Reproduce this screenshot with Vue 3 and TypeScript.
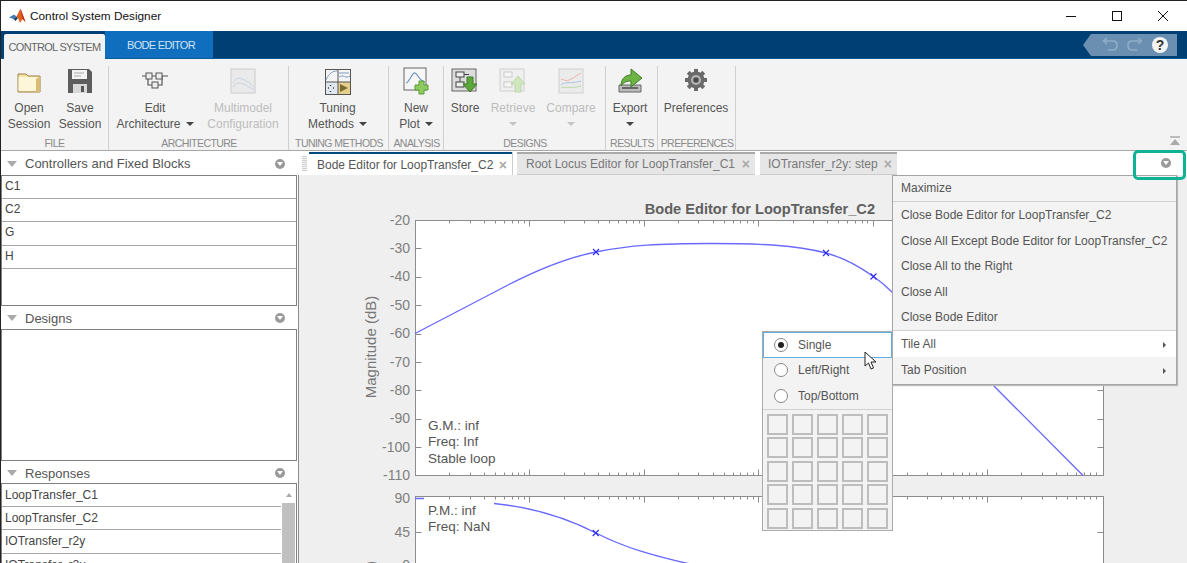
<template>
  <div class="window">
    <!-- title bar -->
    <div class="titlebar">
      <svg class="logo" viewBox="0 0 18 16" width="18" height="16">
        <path d="M0 9.5 L5 6.5 L7.5 8.5 L4.5 11 Z" fill="#3f7db5" />
        <path d="M4.5 11 L7.5 8.5 L9 10 L6.5 13 Z" fill="#1d3f66" />
        <path d="M7.5 8.5 L11.5 0.5 L16.5 14 L13.5 11 L11 15 L9 10 Z" fill="#e2601e" />
        <path d="M11.5 0.5 L16.5 14 L13.5 11 Z" fill="#b8321a" />
      </svg>
      <span class="title-text">Control System Designer</span>
      <div class="win-controls">
        <svg viewBox="0 0 46 31" width="46" height="31"><path d="M0 15.5 H10" transform="translate(18 0)" stroke="#111" /></svg>
        <svg viewBox="0 0 46 31" width="46" height="31"><rect x="18.5" y="10.5" width="9" height="9" fill="none" stroke="#111" /></svg>
        <svg viewBox="0 0 46 31" width="46" height="31"><path d="M18 10 L28 20 M28 10 L18 20" stroke="#111" /></svg>
      </div>
    </div>

    <!-- ribbon tabs -->
    <div class="ribbon-tabs">
      <div class="rtab active">CONTROL SYSTEM</div>
      <div class="rtab other">BODE EDITOR</div>
      <div class="quick">
        <svg viewBox="0 0 94 22" width="94" height="22">
          <path d="M0 11 L8 0 H94 V22 H8 Z" fill="#6a8fb0" />
          <path d="M21 7 H30 Q34 7 34 11.5 Q34 16 30 16 H25 M24 4 L20.5 7 L24 10" fill="none" stroke="#8eaec9" stroke-width="1.6" />
          <path d="M58 7 H49 Q45 7 45 11.5 Q45 16 49 16 H54 M55 4 L58.5 7 L55 10" fill="none" stroke="#8eaec9" stroke-width="1.6" />
          <circle cx="77" cy="11" r="8" fill="#f4f4f4" />
          <text x="77" y="15.5" class="help">?</text>
        </svg>
      </div>
    </div>

    <!-- toolstrip -->
    <div class="toolstrip">
      <div v-for="sec in sections" :key="sec.label" class="section" :style="{ width: sec.width + 'px' }">
        <div class="buttons" :style="{ paddingLeft: (sec.pad || 0) + 'px' }">
          <div
            v-for="b in sec.buttons"
            :key="b.id"
            class="tool"
            :class="{ disabled: b.disabled }"
            :style="{ width: b.width + 'px' }"
          >
            <svg class="tool-icon" viewBox="0 0 28 28" width="28" height="28" v-html="icons[b.id]"></svg>
            <div class="tool-line">{{ b.lines[0] }}</div>
            <div class="tool-line">
              {{ b.lines[1] }}<span v-if="b.caret" class="caret" :class="{ alone: !b.lines[1] }"></span>
            </div>
          </div>
        </div>
        <div class="section-label">{{ sec.label }}</div>
      </div>
      <svg class="collapse" viewBox="0 0 12 10" width="12" height="10">
        <path d="M1 1 H11" stroke="#aaa" stroke-width="1.5" />
        <path d="M6 3 L11 9 H1 Z" fill="#aaa" />
      </svg>
    </div>

    <div class="main">
      <!-- left data browser -->
      <div class="browser">
        <div class="panel-head head-a">
          <span class="tri"></span><span class="panel-title">Controllers and Fixed Blocks</span>
          <span class="opt"></span>
        </div>
        <div class="list list-a">
          <div v-for="name in blocks" :key="name" class="row">{{ name }}</div>
        </div>
        <div class="panel-head">
          <span class="tri"></span><span class="panel-title">Designs</span>
          <span class="opt"></span>
        </div>
        <div class="list list-b"></div>
        <div class="panel-head head-c">
          <span class="tri"></span><span class="panel-title">Responses</span>
          <span class="opt"></span>
        </div>
        <div class="list list-c">
          <div class="rows">
            <div v-for="name in responses" :key="name" class="row">{{ name }}</div>
          </div>
          <div class="scroll">
            <span class="scroll-up"></span>
            <div class="thumb"></div>
          </div>
        </div>
      </div>

      <!-- document area -->
      <div class="docs">
        <div class="doc-tabs">
          <div class="grip"></div>
          <div v-for="t in docTabs" :key="t.label" class="dtab" :class="{ active: t.active }" :style="{ width: t.width + 'px' }">
            <span class="dtab-label">{{ t.label }}</span>
            <span class="dtab-x">×</span>
          </div>
          <span class="opt doc-opt"></span>
        </div>
        <div class="plot-wrap">
          <svg class="plot" viewBox="300 176 887 387" width="887" height="387">
            <text x="875" y="214" text-anchor="end" class="plot-title">Bode Editor for LoopTransfer_C2</text>

            <rect x="415.5" y="220.5" width="688" height="255" fill="#fff" stroke="#8c8c8c" />
            <rect x="415.5" y="496.5" width="688" height="80" fill="#fff" stroke="#8c8c8c" />
            <path :d="tickPath" stroke="#8c8c8c" fill="none" />

            <text v-for="(v, i) in magTicks" :key="v" x="410" :y="224.5 + i * 28.4" class="tick-label">{{ v }}</text>
            <text x="410" y="503" class="tick-label">90</text>
            <text x="410" y="537" class="tick-label">45</text>
            <text x="410" y="570" class="tick-label">0</text>

            <text transform="translate(376 347) rotate(-90)" text-anchor="middle" class="axis-label">Magnitude (dB)</text>
            <text transform="translate(376 561) rotate(-90)" text-anchor="end" class="axis-label">Phase (deg)</text>

            <path
              d="M415 333.5 L508 285 C545 266 570 257 596 252 C630 245 660 243.5 710 243.5 C760 243.5 795 245 826 253 C845 258 860 267 873.5 276.5 C880 281 886 286 893 293 L993 385 L1083 475.5"
              class="curve"
            />
            <path d="M415 498.5 H424 M494 503.5 C530 507 565 517 596 533 C625 548 655 556 690 564" class="curve" />
            <path
              v-for="m in markers"
              :key="m[0]"
              :d="`M${m[0] - 3} ${m[1] - 3} l6 6 m0 -6 l-6 6`"
              stroke="#2a2aee"
              stroke-width="1.1"
            />

            <text x="428" y="430" class="note">G.M.: inf</text>
            <text x="428" y="446" class="note">Freq: Inf</text>
            <text x="428" y="462.5" class="note">Stable loop</text>
            <text x="428" y="515" class="note">P.M.: inf</text>
            <text x="428" y="531" class="note">Freq: NaN</text>
          </svg>
        </div>
      </div>
    </div>

    <!-- tab options menu -->
    <div class="menu">
      <div class="mi first">Maximize</div>
      <div class="mi-group">
        <div v-for="item in closeItems" :key="item" class="mi">{{ item }}</div>
      </div>
      <div class="mi sub hot">Tile All<span class="arrow"></span></div>
      <div class="mi sub">Tab Position<span class="arrow"></span></div>
    </div>

    <!-- tile submenu -->
    <div class="tile">
      <div v-for="(r, i) in tileModes" :key="r" class="radio-row" :class="{ selected: i === 0 }">
        <span class="radio" :class="{ on: i === 0 }"></span>{{ r }}
      </div>
      <div class="tile-grid">
        <div v-for="n in 25" :key="n" class="cell"></div>
      </div>
    </div>

    <svg class="cursor" viewBox="0 0 14 20" width="14" height="20">
      <path d="M1 1 L1 15 L4.5 12 L7 18 L9.5 17 L7 11 L12 11 Z" fill="#fff" stroke="#222" stroke-width="1" />
    </svg>

    <div class="highlight"></div>
  </div>
</template>

<script setup lang="ts">
interface ToolButton {
  id: string
  lines: string[]
  width: number
  caret?: boolean
  disabled?: boolean
}

interface Section {
  label: string
  width: number
  pad?: number
  buttons: ToolButton[]
}

const sections: Section[] = [
  {
    label: 'FILE',
    width: 109,
    pad: 3,
    buttons: [
      { id: 'open', lines: ['Open', 'Session'], width: 52 },
      { id: 'save', lines: ['Save', 'Session'], width: 50 }
    ]
  },
  {
    label: 'ARCHITECTURE',
    width: 180,
    buttons: [
      { id: 'arch', lines: ['Edit', 'Architecture'], width: 92, caret: true },
      { id: 'multi', lines: ['Multimodel', 'Configuration'], width: 84, disabled: true }
    ]
  },
  {
    label: 'TUNING METHODS',
    width: 100,
    buttons: [{ id: 'tuning', lines: ['Tuning', 'Methods'], width: 97, caret: true }]
  },
  {
    label: 'ANALYSIS',
    width: 55,
    buttons: [{ id: 'newplot', lines: ['New', 'Plot'], width: 54, caret: true }]
  },
  {
    label: 'DESIGNS',
    width: 162,
    buttons: [
      { id: 'store', lines: ['Store', ''], width: 42 },
      { id: 'retrieve', lines: ['Retrieve', ''], width: 54, caret: true, disabled: true },
      { id: 'compare', lines: ['Compare', ''], width: 62, caret: true, disabled: true }
    ]
  },
  {
    label: 'RESULTS',
    width: 52,
    buttons: [{ id: 'export', lines: ['Export', ''], width: 48, caret: true }]
  },
  {
    label: 'PREFERENCES',
    width: 78,
    buttons: [{ id: 'prefs', lines: ['Preferences', ''], width: 76 }]
  }
]

const icons: Record<string, string> = {
  open: `<path d="M3 7 h8 l2 2 h12 v16 h-22 z" fill="#f7e3a4" stroke="#9a7f45"/><path d="M3.5 10 h21 v14 h-21 z" fill="#fdf6d8"/><path d="M25 9 v16 h-4 v-13 z" fill="#d9bd72"/>`,
  save: `<path d="M2 2 h21 l3 3 v21 h-24 z" fill="#5d5d5d"/><rect x="6" y="3" width="15" height="9" fill="#f3f3f3"/><path d="M8 6 h10 M8 9 h7" stroke="#aaa"/><rect x="7" y="17" width="14" height="9" fill="#d8d8d8"/><rect x="15" y="19" width="3" height="6" fill="#555"/>`,
  arch: `<path d="M1 9 H27 M7 9 v9 h14 v-9" fill="none" stroke="#555" stroke-width="1.2"/><rect x="5" y="6" width="6" height="6" fill="#eee" stroke="#555"/><rect x="15" y="6" width="6" height="6" fill="#eee" stroke="#555"/><rect x="11" y="15" width="6" height="6" fill="#eee" stroke="#555"/>`,
  multi: `<rect x="2" y="2" width="24" height="24" fill="#eaeaea" stroke="#ccc"/><path d="M4 16 C9 8 13 12 17 14 S23 18 25 20 M4 20 C9 13 14 16 25 23" fill="none" stroke="#c6d3e2"/>`,
  tuning: `<rect x="1" y="2" width="26" height="26" fill="#555"/><rect x="2" y="3" width="11.5" height="11.5" fill="#f4f4f4"/><rect x="14.5" y="3" width="11.5" height="11.5" fill="#f4f4f4"/><rect x="2" y="15.5" width="11.5" height="11.5" fill="#dfe6ee"/><rect x="14.5" y="15.5" width="11.5" height="11.5" fill="#e6cf8c"/><path d="M2 13 C5 6 9 4 13 4 M15 6 H25 M15 10 C19 7 22 12 26 9" fill="none" stroke="#7e9cc0"/><path d="M16 17 L24 21 L16 25 Z" fill="#7a6a30"/><path d="M4 21 h1 M9 21 h1 M6.5 18 v1 M6.5 24 v1" stroke="#444" stroke-width="1.5"/>`,
  newplot: `<rect x="2" y="1" width="22" height="22" fill="#f6f6f6" stroke="#666"/><path d="M4 16 C8 15 10 5 13 6 S17 14 23 15" fill="none" stroke="#6f94c4" stroke-width="1.2"/><path d="M17 14 h5 v4 h4 v5 h-4 v4 h-5 v-4 h-4 v-5 h4 z" fill="#8ecb5e" stroke="#5d9a38"/>`,
  store: `<rect x="1" y="2" width="24" height="22" fill="#dcdcdc" stroke="#666"/><rect x="5" y="5" width="8" height="5" fill="#eee" stroke="#444"/><rect x="5" y="15" width="8" height="5" fill="#eee" stroke="#444"/><path d="M9 10 v5 M13 7.5 h5" stroke="#444"/><path d="M16 10 h6 v7 h4 l-7 8 l-7 -8 h4 z" fill="#5da63a" stroke="#3d7a25"/>`,
  retrieve: `<rect x="1" y="2" width="24" height="22" fill="#efefef" stroke="#d0d0d0"/><rect x="5" y="5" width="8" height="5" fill="#f6f6f6" stroke="#ccc"/><rect x="5" y="15" width="8" height="5" fill="#f6f6f6" stroke="#ccc"/><path d="M12 17 l7 -8 l7 8 h-4 v8 h-6 v-8 z" fill="#cfe6bf" stroke="#bcd8aa"/>`,
  compare: `<rect x="2" y="2" width="24" height="24" fill="#ebebeb" stroke="#d0d0d0"/><path d="M4 12 L10 14 L16 11 L24 6" fill="none" stroke="#eab5a8"/><path d="M4 18 C9 14 14 17 24 14" fill="none" stroke="#a9c6e4"/><path d="M4 21 C9 19 14 22 24 19" fill="none" stroke="#bcd8a8"/>`,
  export: `<path d="M3 18 h22 v7 h-22 z" fill="#bbb" stroke="#666"/><rect x="6" y="20" width="16" height="2" fill="#666"/><path d="M5 19 C5 11 10 8 15 8 V2 L26 11 L15 20 V14 C11 14 8 15 5 19 Z" fill="#6cb344" stroke="#3f7f2b"/>`,
  prefs: `<g transform="translate(14 13)"><circle r="8.5" fill="#6a6a6a"/><path d="M-2 -11 h4 v4 h-4 z M-2 7 h4 v4 h-4 z M-11 -2 h4 v4 h-4 z M7 -2 h4 v4 h-4 z" fill="#6a6a6a"/><path d="M-2 -11 h4 v4 h-4 z M-2 7 h4 v4 h-4 z M-11 -2 h4 v4 h-4 z M7 -2 h4 v4 h-4 z" fill="#6a6a6a" transform="rotate(45)"/><circle r="5" fill="#b5b5b5"/><circle r="2.8" fill="#4a4a4a"/></g>`
}

const blocks = ['C1', 'C2', 'G', 'H']
const responses = ['LoopTransfer_C1', 'LoopTransfer_C2', 'IOTransfer_r2y', 'IOTransfer_r2u']

const docTabs = [
  { label: 'Bode Editor for LoopTransfer_C2', width: 203, active: true },
  { label: 'Root Locus Editor for LoopTransfer_C1', width: 238, active: false },
  { label: 'IOTransfer_r2y: step', width: 137, active: false }
]

const closeItems = [
  'Close Bode Editor for LoopTransfer_C2',
  'Close All Except Bode Editor for LoopTransfer_C2',
  'Close All to the Right',
  'Close All',
  'Close Bode Editor'
]

const tileModes = ['Single', 'Left/Right', 'Top/Bottom']

const magTicks = [-20, -30, -40, -50, -60, -70, -80, -90, -100, -110]

const markers = [
  [596, 252],
  [826, 253],
  [873.5, 276.5],
  [595.7, 533]
]

// log-scale x ticks on the top and bottom of each axes, plus the y ticks
const DECADE = 114.4
const X0 = 415
function buildTicks(): string {
  let d = ''
  const xEdges: [number, number][] = [
    [220.5, 1],
    [475.5, -1],
    [496.5, 1]
  ]
  for (let dec = 0; dec < 6; dec++) {
    for (let m = 1; m <= 9; m++) {
      const x = Math.round(X0 + (dec + Math.log10(m)) * DECADE) + 0.5
      if (x > 1103) continue
      const len = m === 1 && dec > 0 ? 6 : 3
      for (const [y, dir] of xEdges) {
        d += `M${x} ${y} v${len * dir} `
      }
    }
  }
  for (let i = 1; i < 9; i++) {
    const y = Math.round(220 + i * 28.4) + 0.5
    d += `M415.5 ${y} h6 M1103.5 ${y} h-6 `
  }
  d += 'M415.5 532.5 h6 M1103.5 532.5 h-6 '
  return d
}
const tickPath = buildTicks()
</script>

<style>
html,
body {
  margin: 0;
  background: #fff;
  overflow: hidden;
}
</style>

<style scoped>
.window {
  position: relative;
  width: 1187px;
  height: 563px;
  overflow: hidden;
  box-sizing: border-box;
  border-top: 1px solid #222;
  font-family: "Liberation Sans", Arial, sans-serif;
  display: flex;
  flex-direction: column;
  background: #fff;
}
.window::before {
  content: "";
  position: absolute;
  left: 0;
  top: 0;
  bottom: 0;
  width: 1px;
  background: #222;
  z-index: 5;
}

.titlebar {
  height: 30px;
  flex: none;
  display: flex;
  align-items: center;
  padding-left: 9px;
  background: #fff;
}
.logo {
  margin-right: 3px;
}
.title-text {
  font-size: 11.8px;
  color: #111;
}
.win-controls {
  margin-left: auto;
  display: flex;
  margin-right: 1px;
}

.ribbon-tabs {
  height: 28px;
  flex: none;
  display: flex;
  background: #003f73;
  position: relative;
  box-sizing: border-box;
  border-bottom: 1px solid #0a5a94;
}
.rtab {
  font-size: 11px;
  letter-spacing: -0.7px;
  white-space: nowrap;
  display: flex;
  align-items: center;
  justify-content: center;
}
.rtab.active {
  width: 101px;
  margin: 3px 0 -1px 4px;
  background: #f3f3f3;
  color: #666;
  border-radius: 2px 2px 0 0;
}
.rtab.other {
  width: 108px;
  box-sizing: border-box;
  padding-left: 4px;
  background: #0f6fbe;
  color: #cfe3f5;
}
.quick {
  margin-left: auto;
  margin-right: 10px;
  margin-top: 3px;
  height: 22px;
}
.help {
  font: bold 14px "Liberation Sans", Arial, sans-serif;
  fill: #333;
  text-anchor: middle;
}

.toolstrip {
  height: 92px;
  flex: none;
  display: flex;
  position: relative;
  background: #f3f3f3;
  box-sizing: border-box;
  border-bottom: 1px solid #a8a8a8;
}
.section {
  flex: none;
  box-sizing: border-box;
  display: flex;
  flex-direction: column;
  position: relative;
}
.section::after {
  content: "";
  position: absolute;
  right: 0;
  top: 7px;
  bottom: 0;
  width: 1px;
  background: #cfcfcf;
}
.buttons {
  flex: 1;
  display: flex;
}
.tool {
  flex: none;
  display: flex;
  flex-direction: column;
  align-items: center;
  padding-top: 8px;
  font-size: 12px;
  color: #555;
}
.tool.disabled {
  color: #bdbdbd;
}
.tool-icon {
  flex: none;
  margin-bottom: 5px;
}
.tool-line {
  height: 16px;
  line-height: 16px;
  white-space: nowrap;
}
.caret {
  display: inline-block;
  width: 0;
  height: 0;
  margin-left: 5px;
  vertical-align: 2px;
  border-left: 4px solid transparent;
  border-right: 4px solid transparent;
  border-top: 4px solid #444;
}
.caret.alone {
  margin-left: 0;
}
.tool.disabled .caret {
  border-top-color: #c4c4c4;
}
.section-label {
  height: 14px;
  line-height: 15px;
  text-align: center;
  font-size: 10.5px;
  letter-spacing: -0.55px;
  color: #8a8a8a;
  white-space: nowrap;
}
.collapse {
  position: absolute;
  right: 6px;
  bottom: 4px;
}

.main {
  flex: 1;
  display: flex;
  min-height: 0;
}

.browser {
  width: 298px;
  flex: none;
  box-sizing: border-box;
  padding: 0 1px;
  display: flex;
  flex-direction: column;
  background: #fff;
}
.panel-head {
  height: 23px;
  flex: none;
  display: flex;
  box-sizing: border-box;
  align-items: center;
  padding-left: 6px;
  padding-right: 12px;
  padding-top: 1px;
  font-size: 13px;
  color: #555;
}
.head-a {
  height: 24px;
}
.head-c {
  height: 22px;
  padding-top: 2px;
}
.tri {
  width: 0;
  height: 0;
  border-left: 5px solid transparent;
  border-right: 5px solid transparent;
  border-top: 6px solid #aaa;
  margin-right: 8px;
}
.opt {
  margin-left: auto;
  width: 10px;
  height: 10px;
  border-radius: 50%;
  background: #9a9a9a;
  position: relative;
}
.opt::after {
  content: "";
  position: absolute;
  left: 2px;
  top: 3px;
  border-left: 3px solid transparent;
  border-right: 3px solid transparent;
  border-top: 4px solid #fff;
}
.list {
  flex: none;
  box-sizing: border-box;
  border: 1px solid #808080;
  background: #fff;
}
.list-a {
  height: 131px;
}
.list-a .row {
  line-height: 20px;
}
.list-b {
  height: 132px;
}
.list-c {
  flex: 1;
  display: flex;
  border-bottom: none;
  overflow: hidden;
}
.rows {
  flex: 1;
}
.row {
  height: 23.2px;
  box-sizing: border-box;
  line-height: 22px;
  padding-left: 3px;
  font-size: 12px;
  color: #444;
  border-bottom: 1px solid #a8a8a8;
}
.scroll {
  width: 15px;
  flex: none;
  display: flex;
  flex-direction: column;
  align-items: center;
}
.scroll-up {
  margin-top: 9px;
  margin-bottom: 6px;
  border-left: 3px solid transparent;
  border-right: 3px solid transparent;
  border-bottom: 4px solid #aaa;
}
.thumb {
  width: 13px;
  flex: 1;
  background: #c0c0c0;
}

.docs {
  flex: 1;
  display: flex;
  flex-direction: column;
  min-width: 0;
  background: #efefef;
}
.doc-tabs {
  height: 24px;
  flex: none;
  display: flex;
  position: relative;
  align-items: stretch;
  background: #fff;
  box-sizing: border-box;
  padding-left: 4px;
  padding-top: 1px;
}
.grip {
  width: 5px;
  margin: 4px 2px 4px 0;
  background: repeating-linear-gradient(#cfcfcf 0 1px, #f3f3f3 1px 2px);
}
.dtab {
  flex: none;
  box-sizing: border-box;
  margin-right: 5px;
  display: flex;
  align-items: center;
  justify-content: space-between;
  padding: 0 5px 0 8px;
  font-size: 12px;
  color: #777;
  background: #e6e6e6;
  border-top: 2px solid #aaa;
  border-bottom: 1px solid #ccc;
  white-space: nowrap;
}
.dtab:nth-of-type(3) {
  padding-left: 9px;
}
.dtab.active {
  background: #fff;
  color: #555;
  border-top-color: #00497f;
  border-bottom: none;
  box-shadow: 1px 0 0 #ccc;
}
.dtab-x {
  font-size: 14px;
  color: #aaa;
  font-weight: bold;
}
.doc-opt {
  position: absolute;
  right: 16px;
  top: 7px;
}
.plot-wrap {
  flex: 1;
  min-height: 0;
  overflow: hidden;
  border-left: 1px solid #8c8c8c;
}
.plot {
  display: block;
  margin: 1px 0 0 1px;
}
.plot-title {
  font-size: 14.6px;
  font-weight: bold;
  fill: #606060;
}
.tick-label {
  font-size: 14px;
  fill: #808080;
  text-anchor: end;
}
.axis-label {
  font-size: 15px;
  fill: #777;
}
.note {
  font-size: 13.5px;
  fill: #555;
}
.curve {
  fill: none;
  stroke: #6a6aff;
  stroke-width: 1.4;
}

.menu {
  position: absolute;
  left: 892px;
  top: 174px;
  width: 285px;
  box-sizing: border-box;
  background: #f3f3f3;
  border: 1px solid #a4a4a4;
  box-shadow: 1px 1px 1px #bbb;
  font-size: 12px;
  color: #555;
  z-index: 2;
}
.mi {
  height: 25.6px;
  line-height: 26px;
  padding-left: 8px;
  white-space: nowrap;
  position: relative;
}
.mi.first {
  height: 25px;
  line-height: 25px;
  border-bottom: 1px solid #d0d0d0;
}
.mi-group {
  border-bottom: 1px solid #d0d0d0;
}
.mi.sub {
  height: 26.5px;
}
.mi.hot {
  background: #fff;
}
.arrow {
  position: absolute;
  right: 10px;
  top: 11px;
  border-top: 3px solid transparent;
  border-bottom: 3px solid transparent;
  border-left: 3px solid #555;
}

.tile {
  position: absolute;
  left: 762px;
  top: 330px;
  width: 131px;
  box-sizing: border-box;
  background: #f3f3f3;
  border: 1px solid #aaa;
  font-size: 12px;
  color: #555;
  z-index: 3;
}
.radio-row {
  height: 25.5px;
  box-sizing: border-box;
  display: flex;
  align-items: center;
  padding-left: 11px;
}
.radio-row.selected {
  background: #fff;
  outline: 1px solid #62ade0;
  outline-offset: -1px;
}
.radio {
  width: 14px;
  height: 14px;
  box-sizing: border-box;
  border-radius: 50%;
  border: 1px solid #888;
  background: #fff;
  margin-right: 10px;
  position: relative;
}
.radio.on::after {
  content: "";
  position: absolute;
  left: 3px;
  top: 3px;
  width: 6px;
  height: 6px;
  border-radius: 50%;
  background: #222;
}
.tile-grid {
  border-top: 1px solid #d0d0d0;
  display: grid;
  grid-template-columns: repeat(5, 21px);
  grid-auto-rows: 21px;
  column-gap: 4px;
  row-gap: 2.5px;
  padding: 4px 4px 1px;
}
.cell {
  box-sizing: border-box;
  border: 2px solid #bdbdbd;
}

.cursor {
  position: absolute;
  left: 864px;
  top: 350px;
  z-index: 4;
}
.highlight {
  position: absolute;
  left: 1133px;
  top: 149px;
  width: 53px;
  height: 30px;
  box-sizing: border-box;
  border: 3px solid #0fb295;
  border-radius: 5px;
  z-index: 4;
}
</style>
